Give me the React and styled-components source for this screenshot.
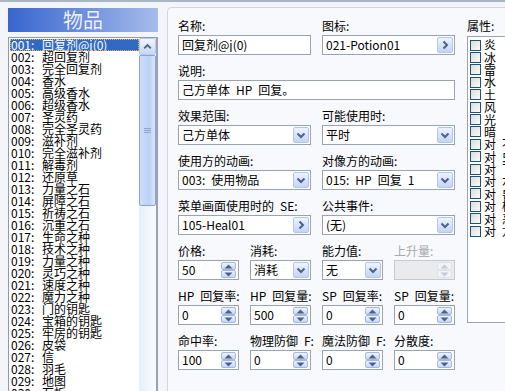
import React from "react";
import styled, { createGlobalStyle } from "styled-components";

const GlobalStyle = createGlobalStyle`
  html, body {
    margin: 0;
    padding: 0;
    background: #f3f5fa;
  }
  body {
    font-family: "Noto Sans CJK SC", "Noto Sans", sans-serif;
    font-size: 12px;
    color: #000;
  }
`;

// SimSun's half-width space is 6px wide, an en space gives the same gap
const sp = (s) => s.replace(/ /g, "\u2002");

const items = [
  "回复剂@j(0)",
  "超回复剂",
  "完全回复剂",
  "香水",
  "高级香水",
  "超级香水",
  "圣灵药",
  "完全圣灵药",
  "滋补剂",
  "完全滋补剂",
  "解毒剂",
  "还原草",
  "力量之石",
  "屏障之石",
  "祈祷之石",
  "沉重之石",
  "生命之种",
  "技术之种",
  "力量之种",
  "灵巧之种",
  "速度之种",
  "魔力之种",
  "门的钥匙",
  "宝箱的钥匙",
  "牢房的钥匙",
  "皮袋",
  "信",
  "羽毛",
  "地图",
  "石板",
];

const elements = [
  "炎", "冰", "雷", "水", "土", "风", "光", "暗",
  "对 不死", "对 虫", "对 飞行", "对 水栖", "对 兽", "对 植物", "对 恶魔", "对 龙",
];

function Chevron({ dir }) {
  const d = {
    down: "M4.5 6.5 L8 10 L11.5 6.5",
    right: "M6.5 4.5 L10 8 L6.5 11.5",
    up: "M4.5 9.5 L8 6 L11.5 9.5",
  }[dir];
  return (
    <svg width="16" height="16" viewBox="0 0 16 16">
      <path d={d} fill="none" stroke="#4d6185" strokeWidth="2" />
    </svg>
  );
}

function Tri({ up, faded }) {
  return (
    <svg width="9" height="5" viewBox="0 0 9 5">
      <path
        d={up ? "M0.5 4.5 L4.5 0.5 L8.5 4.5 Z" : "M0.5 0.5 L4.5 4.5 L8.5 0.5 Z"}
        fill={faded ? "#c3cbd8" : "#4d6185"}
      />
    </svg>
  );
}

function TextField({ label, value, button, span = 2 }) {
  return (
    <Field $span={span}>
      <Label>{sp(label)}</Label>
      <Box>
        <Value>{sp(value)}</Value>
        {button && (
          <SideButton>
            <Chevron dir="right" />
          </SideButton>
        )}
      </Box>
    </Field>
  );
}

function SelectField({ label, value, span = 2 }) {
  return (
    <Field $span={span}>
      <Label>{sp(label)}</Label>
      <Box>
        <Value>{sp(value)}</Value>
        <SideButton>
          <Chevron dir="down" />
        </SideButton>
      </Box>
    </Field>
  );
}

function SpinField({ label, value, disabled }) {
  return (
    <Field $span={1}>
      <Label $disabled={disabled}>{sp(label)}</Label>
      <Box $disabled={disabled}>
        <Value>{value}</Value>
        <SpinStack>
          <SpinHalf $disabled={disabled}>
            <Tri up faded={disabled} />
          </SpinHalf>
          <SpinHalf $disabled={disabled}>
            <Tri faded={disabled} />
          </SpinHalf>
        </SpinStack>
      </Box>
    </Field>
  );
}

export default function App() {
  return (
    <>
      <GlobalStyle />
      <Window>
        <LeftPane>
          <Header>物品</Header>
          <ListBox>
            <ListItems>
              {items.map((name, i) => (
                <Item key={i} $selected={i === 0}>
                  <Num>{String(i + 1).padStart(3, "0")}:</Num>
                  {name}
                </Item>
              ))}
            </ListItems>
            <ScrollBar>
              <ScrollButton>
                <Chevron dir="up" />
              </ScrollButton>
              <Thumb>
                <Grip />
              </Thumb>
            </ScrollBar>
          </ListBox>
        </LeftPane>

        <Panel>
          <FormGrid>
            <TextField label="名称:" value="回复剂@j(0)" />
            <TextField label="图标:" value="021-Potion01" button />

            <TextField label="说明:" value="己方单体 HP 回复。" span={4} />

            <SelectField label="效果范围:" value="己方单体" />
            <SelectField label="可能使用时:" value="平时" />

            <SelectField label="使用方的动画:" value="003: 使用物品" />
            <SelectField label="对像方的动画:" value="015: HP 回复 1" />

            <TextField label="菜单画面使用时的 SE:" value="105-Heal01" button />
            <SelectField label="公共事件:" value="(无)" />

            <SpinField label="价格:" value="50" />
            <SelectField label="消耗:" value="消耗" span={1} />
            <SelectField label="能力值:" value="无" span={1} />
            <SpinField label="上升量:" value="" disabled />

            <SpinField label="HP 回复率:" value="0" />
            <SpinField label="HP 回复量:" value="500" />
            <SpinField label="SP 回复率:" value="0" />
            <SpinField label="SP 回复量:" value="0" />

            <SpinField label="命中率:" value="100" />
            <SpinField label="物理防御 F:" value="0" />
            <SpinField label="魔法防御 F:" value="0" />
            <SpinField label="分散度:" value="0" />
          </FormGrid>

          <AttrColumn>
            <Label>属性:</Label>
            <CheckList>
              {elements.map((el) => (
                <CheckRow key={el}>
                  <CheckBox />
                  <span>{sp(el)}</span>
                </CheckRow>
              ))}
            </CheckList>
          </AttrColumn>
        </Panel>
      </Window>
    </>
  );
}

const Window = styled.div`
  width: 505px;
  height: 391px;
  overflow: hidden;
  display: flex;
  align-items: flex-start;
  box-sizing: border-box;
  border-top: 2px solid #a9b4c7;
  background: #f3f5fa;
`;

const LeftPane = styled.div`
  width: 150px;
  flex-shrink: 0;
  padding: 6px 0 0 8px;
  display: flex;
  flex-direction: column;
  gap: 5px;
`;

const Header = styled.div`
  height: 24px;
  background: linear-gradient(90deg, #3766cf 0%, #6d8fdc 50%, #a6bcea 100%);
  color: #eef2fd;
  font-size: 20px;
  line-height: 24px;
  text-align: center;
  text-shadow: 0 0 1px #5a7fd4;
`;

const ListBox = styled.div`
  height: 400px;
  border: 1px solid #8a9cb5;
  border-right: 2px solid #9aa3b3;
  background: #fff;
  display: flex;
  justify-content: space-between;
`;

const ListItems = styled.div`
  width: 129px;
  padding: 1px 0 0 1px;
`;

const Item = styled.div`
  height: 12px;
  line-height: 12px;
  white-space: nowrap;
  box-sizing: border-box;
  padding-left: 1px;
  background: ${(p) => (p.$selected ? "#316ac5" : "transparent")};
  color: ${(p) => (p.$selected ? "#fff" : "#000")};
  outline: ${(p) => (p.$selected ? "1px dotted #f0b040" : "none")};
  outline-offset: -1px;
`;

const Num = styled.span`
  display: inline-block;
  width: 31px;
`;

const ScrollBar = styled.div`
  width: 17px;
  display: flex;
  flex-direction: column;
  background: linear-gradient(90deg, #e6effd, #f7faff);
`;

const ScrollButton = styled.div`
  height: 17px;
  box-sizing: border-box;
  border: 1px solid #b9cbef;
  border-radius: 2px;
  background: linear-gradient(180deg, #f1f6ff, #c5d6f6);
  display: flex;
  align-items: center;
  justify-content: center;
`;

const Thumb = styled.div`
  height: 151px;
  box-sizing: border-box;
  border: 1px solid #8ca3d1;
  border-radius: 2px;
  background: linear-gradient(90deg, #cfdefb, #bcd1f6 60%, #d9e6fd);
  display: flex;
  align-items: center;
  justify-content: center;
`;

const Grip = styled.div`
  width: 7px;
  height: 5px;
  background: repeating-linear-gradient(180deg, #8aa3d3 0 1px, transparent 1px 2px);
`;

const Panel = styled.div`
  margin: 5px 0 0 9px;
  height: 400px;
  flex: 1;
  box-sizing: border-box;
  padding: 12px 0 0 10px;
  border: 1px solid #d2d6df;
  border-right: none;
  border-bottom: none;
  border-top-left-radius: 5px;
  background: #f8f9fc;
  display: flex;
  gap: 12px;
`;

const FormGrid = styled.div`
  width: 277px;
  flex-shrink: 0;
  display: grid;
  grid-template-columns: repeat(4, 61px);
  column-gap: 11px;
  row-gap: 10px;
  align-content: start;
`;

const Field = styled.div`
  grid-column: span ${(p) => p.$span};
  display: flex;
  flex-direction: column;
  gap: 3px;
`;

const Label = styled.div`
  height: 12px;
  line-height: 12px;
  white-space: nowrap;
  color: ${(p) => (p.$disabled ? "#a7a9ad" : "#000")};
`;

const Box = styled.div`
  height: 20px;
  box-sizing: border-box;
  border: 1px solid ${(p) => (p.$disabled ? "#c5c9d0" : "#9aa3b0")};
  background: ${(p) => (p.$disabled ? "#ebebee" : "#fff")};
  display: flex;
  align-items: center;
  padding: 0 1px 0 3px;
`;

const Value = styled.div`
  flex: 1;
  white-space: nowrap;
  overflow: hidden;
  line-height: 14px;
`;

const SideButton = styled.div`
  width: 16px;
  height: 16px;
  box-sizing: border-box;
  border: 1px solid #b3c6ec;
  border-radius: 2px;
  background: linear-gradient(180deg, #eef3fe, #c3d5f6);
  display: flex;
  align-items: center;
  justify-content: center;
  svg {
    flex-shrink: 0;
  }
`;

const SpinStack = styled.div`
  width: 15px;
  height: 16px;
  display: flex;
  flex-direction: column;
  margin-right: 1px;
`;

const SpinHalf = styled.div`
  flex: 1;
  box-sizing: border-box;
  border: 1px solid ${(p) => (p.$disabled ? "#dfe3ea" : "#a5b8dc")};
  border-radius: 2px;
  background: ${(p) =>
    p.$disabled
      ? "#f2f3f6"
      : "linear-gradient(180deg, #eef3fe, #c6d7f6)"};
  display: flex;
  align-items: center;
  justify-content: center;
`;

const AttrColumn = styled.div`
  display: flex;
  flex-direction: column;
  gap: 4px;
  flex-shrink: 0;
`;

const CheckList = styled.div`
  width: 70px;
  height: 287px;
  box-sizing: border-box;
  border: 1px solid #9aa3b0;
  border-right: none;
  background: #fff;
  padding: 2px 0 0 2px;
`;

const CheckRow = styled.div`
  height: 12.4px;
  display: flex;
  align-items: center;
  gap: 3px;
  line-height: 12px;
  white-space: nowrap;
`;

const CheckBox = styled.div`
  width: 11px;
  height: 11px;
  flex-shrink: 0;
  box-sizing: border-box;
  border: 1px solid #1c5180;
  background: linear-gradient(135deg, #dcdcd6, #fafaf8);
`;
